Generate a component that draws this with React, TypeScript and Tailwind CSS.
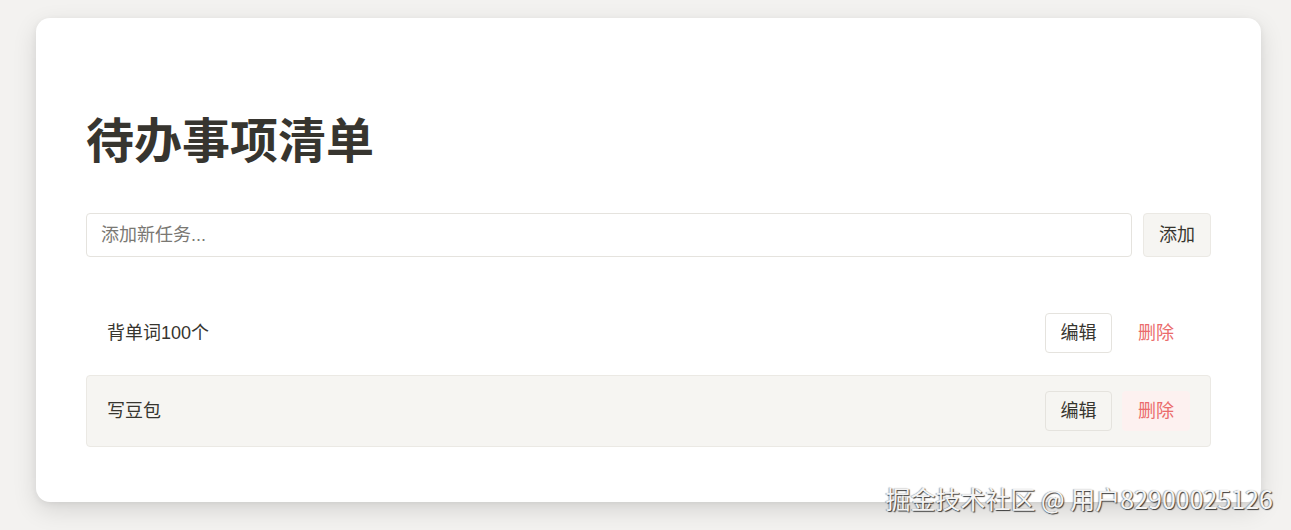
import React from "react";

const font = { fontFamily: '"Noto Sans CJK SC", "Liberation Sans", sans-serif' };

export default function App() {
  const items = ["背单词100个", "写豆包"];
  return (
    <div
      className="relative w-[1291px] h-[530px] overflow-hidden bg-[#f3f2f0] pt-[18px] pl-[36px] font-['Liberation_Sans','Noto_Sans_CJK_SC',sans-serif]"
    >
      <div className="w-[1225px] h-[484px] rounded-[14px] bg-white shadow-[0_8px_24px_rgba(0,0,0,0.12),0_2px_6px_rgba(0,0,0,0.06)] px-[50px] pt-[90px]">
        <h1
          className="text-[48px] leading-[58px] font-bold text-[#37352f] mb-[47px]"
          style={font}
        >
          待办事项清单
        </h1>
        <div className="flex gap-[11px] mb-[40px]">
          <input
            placeholder="添加新任务..."
            className="flex-1 h-[44px] rounded-[4px] border border-[#e5e3de] px-[14px] text-[18px] text-[#37352f] placeholder:text-[#7a7873] outline-none"
          />
          <button className="w-[68px] h-[44px] rounded-[4px] border border-[#ebe9e4] bg-[#f6f5f2] text-[18px] text-[#37352f]">
            添加
          </button>
        </div>
        <div className="flex flex-col gap-[6px]">
          {items.map((t, i) => (
            <div
              key={t}
              className={
                i === 1
                  ? "flex items-center justify-between rounded-[4px] border border-[#ebe9e4] bg-[#f6f5f2] px-[20px] py-[15px]"
                  : "flex items-center justify-between rounded-[4px] border border-transparent px-[20px] py-[15px]"
              }
            >
              <span className="text-[18px] text-[#37352f]">{t}</span>
              <div className="flex gap-[10px]">
                <button className="w-[67px] h-[40px] rounded-[4px] border border-[#e5e3de] text-[18px] text-[#37352f]">
                  编辑
                </button>
                <button
                  className={
                    i === 1
                      ? "w-[68px] h-[40px] rounded-[4px] bg-[#fdf1f0] text-[18px] text-[#eb6b6b]"
                      : "w-[68px] h-[40px] rounded-[4px] text-[18px] text-[#eb6b6b]"
                  }
                >
                  删除
                </button>
              </div>
            </div>
          ))}
        </div>
      </div>
      <div
        className="absolute right-[18px] bottom-[18px] text-[25px] leading-[28px] text-[#f4f4f4] [text-shadow:1px_1px_1px_rgba(0,0,0,0.75),-1px_0_1px_rgba(0,0,0,0.35)]"
        style={font}
      >
        掘金技术社区 @ 用户82900025126
      </div>
    </div>
  );
}
